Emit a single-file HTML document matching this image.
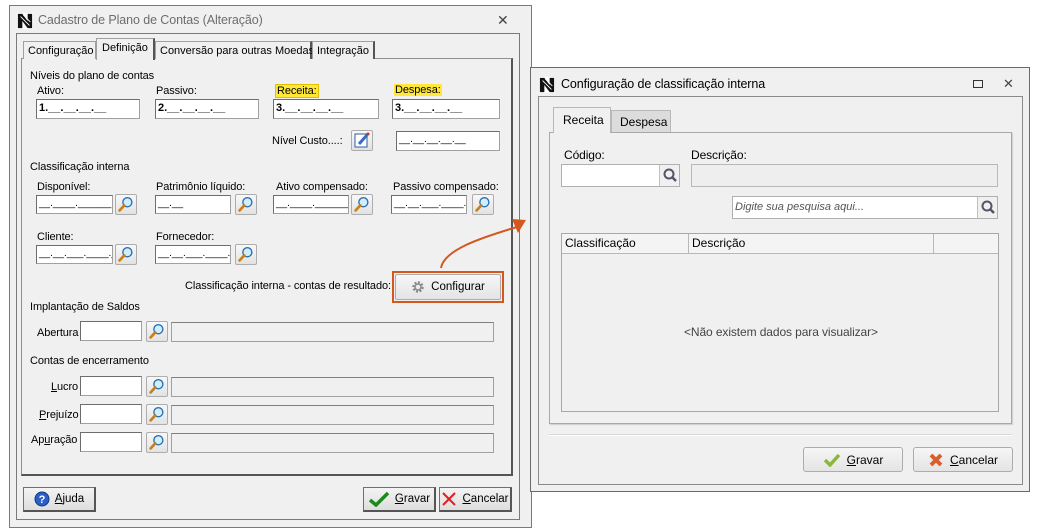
<!DOCTYPE html>
<html><head><meta charset="utf-8"><style>
*{box-sizing:border-box;margin:0;padding:0}
body{width:1040px;height:531px;background:#fff;position:relative;overflow:hidden;font-family:"Liberation Sans",sans-serif;font-size:11px;color:#000}
.a{position:absolute;white-space:nowrap}
.in{position:absolute;background:#fff;border:1px solid #a0a0a0;border-top-color:#6d6d6d;border-left-color:#6d6d6d;font-size:10px;padding:2px 2px;white-space:nowrap;overflow:hidden}
.ro{position:absolute;background:#f0f0f0;border:1px solid #a0a0a0;border-top-color:#808080}
.lupa{position:absolute;width:22px;height:21px;border:1px solid #adadad;border-radius:2px;background:linear-gradient(#f8f8f8,#e2e2e2)}
.btn{position:absolute;border:1px solid #707070;background:linear-gradient(#f4f4f4,#dedede);display:flex;align-items:center;justify-content:center;gap:5px;font-size:11.5px}
.btn2{position:absolute;border:1px solid #acacac;border-radius:3px;background:linear-gradient(#f6f6f6,#e4e4e4);display:flex;align-items:center;justify-content:center;gap:6px;font-size:12px}
.lbl{position:absolute;font-size:11px;white-space:nowrap;letter-spacing:-0.1px}
u{text-decoration:underline}
</style></head><body>
<svg width="0" height="0" style="position:absolute"><defs>
<symbol id="mg" viewBox="0 0 22 21"><circle cx="12.5" cy="8" r="5" fill="#cfefff" stroke="#2a6fb0" stroke-width="1.5"/><path d="M9 11.5 L4 17" stroke="#c8801a" stroke-width="3" stroke-linecap="round"/></symbol>
<symbol id="lg" viewBox="0 0 18 18"><rect width="18" height="18" fill="#fff"/><path d="M1 1h5l6 8v-8h5v16h-5l-6-8v8h-5z" fill="#111"/><path d="M4 4l10 10M7 2l8 8" stroke="#fff" stroke-width="1"/></symbol>
</defs></svg>

<!-- LEFT WINDOW -->
<div class="a" style="left:9px;top:5px;width:523px;height:523px;border:1px solid #7a7a7a;background:#f0f0f0"></div>
<svg class="a" style="left:17px;top:13px" width="16" height="16"><use href="#lg"/></svg>
<div class="lbl" style="left:38px;top:13px;font-size:12.5px;color:#6d6d6d">Cadastro de Plano de Contas (Alteração)</div>
<div class="lbl" style="left:497px;top:12px;font-size:14px;color:#444">✕</div>
<div class="a" style="left:16px;top:33px;width:504px;height:487px;border:1px solid #7a7a7a;background:#f0f0f0"></div>
<!-- tabs -->
<div class="a" style="left:21px;top:58px;width:492px;height:418px;border:1px solid #909090;border-right:2px solid #555;border-bottom:2px solid #555;background:#f0f0f0"></div>
<div class="a" style="left:23px;top:41px;width:73px;height:18px;border:1px solid #a0a0a0;border-bottom:none;background:#f0f0f0;padding:3px 4px">Configuração</div>
<div class="a" style="left:96px;top:38px;width:59px;height:22px;border:1px solid #a0a0a0;border-right:2px solid #555;border-bottom:none;background:#f0f0f0;padding:3px 5px">Definição</div>
<div class="a" style="left:155px;top:41px;width:157px;height:18px;border:1px solid #a0a0a0;border-right:2px solid #555;border-bottom:none;background:#f0f0f0;padding:3px 4px">Conversão para outras Moedas</div>
<div class="a" style="left:312px;top:41px;width:63px;height:18px;border:1px solid #a0a0a0;border-right:2px solid #555;border-bottom:none;background:#f0f0f0;padding:3px 4px">Integração</div>

<div class="lbl" style="left:30px;top:70px">Níveis do plano de contas</div>
<div class="lbl" style="left:37px;top:85px">Ativo:</div>
<div class="lbl" style="left:156px;top:85px">Passivo:</div>
<div class="lbl" style="left:275px;top:84px;background:#ffe83a;border:1px solid #e0c000;padding:0 1px">Receita:</div>
<div class="lbl" style="left:394px;top:84px;background:#ffe83a;padding:0 1px">Despesa:</div>
<div class="in" style="left:36px;top:99px;width:104px;height:20px;font-weight:bold;font-size:11px">1.__.__.__.__</div>
<div class="in" style="left:155px;top:99px;width:104px;height:20px;font-weight:bold;font-size:11px">2.__.__.__.__</div>
<div class="in" style="left:273px;top:99px;width:106px;height:20px;font-weight:bold;font-size:11px">3.__.__.__.__</div>
<div class="in" style="left:392px;top:99px;width:108px;height:20px;font-weight:bold;font-size:11px">3.__.__.__.__</div>
<div class="lbl" style="left:272px;top:135px">Nível Custo....:</div>
<div class="lupa" style="left:351px;top:130px"><svg width="20" height="19" viewBox="0 0 20 19"><rect x="3" y="3" width="12" height="13" fill="#fff" stroke="#2a5ea8"/><path d="M7 13 L15 4" stroke="#3a6cc0" stroke-width="3"/><circle cx="16" cy="3" r="1.5" fill="#c03030"/></svg></div>
<div class="in" style="left:396px;top:131px;width:104px;height:20px">__.__.__.__.__</div>

<div class="lbl" style="left:30px;top:161px">Classificação interna</div>
<div class="lbl" style="left:37px;top:181px">Disponível:</div>
<div class="lbl" style="left:156px;top:181px">Patrimônio líquido:</div>
<div class="lbl" style="left:276px;top:181px">Ativo compensado:</div>
<div class="lbl" style="left:393px;top:181px">Passivo compensado:</div>
<div class="in" style="left:36px;top:195px;width:77px;height:19px">__.____.______</div><div class="lupa" style="left:115px;top:194px"><svg width="20" height="19"><use href="#mg"/></svg></div>
<div class="in" style="left:155px;top:195px;width:76px;height:19px">__.__</div><div class="lupa" style="left:235px;top:194px"><svg width="20" height="19"><use href="#mg"/></svg></div>
<div class="in" style="left:273px;top:195px;width:76px;height:19px">__.____.______</div><div class="lupa" style="left:351px;top:194px"><svg width="20" height="19"><use href="#mg"/></svg></div>
<div class="in" style="left:391px;top:195px;width:76px;height:19px">__.__.___.____.__</div><div class="lupa" style="left:472px;top:194px"><svg width="20" height="19"><use href="#mg"/></svg></div>
<div class="lbl" style="left:37px;top:231px">Cliente:</div>
<div class="lbl" style="left:156px;top:231px">Fornecedor:</div>
<div class="in" style="left:36px;top:245px;width:77px;height:19px">__.__.___.____.__</div><div class="lupa" style="left:115px;top:244px"><svg width="20" height="19"><use href="#mg"/></svg></div>
<div class="in" style="left:155px;top:245px;width:76px;height:19px">__.__.___.____.__</div><div class="lupa" style="left:235px;top:244px"><svg width="20" height="19"><use href="#mg"/></svg></div>

<div class="lbl" style="left:185px;top:280px">Classificação interna - contas de resultado:</div>
<div class="a" style="left:392px;top:271px;width:112px;height:32px;border:2px solid #d4571c"></div>
<div class="btn2" style="left:395px;top:274px;width:106px;height:26px;border-radius:2px;font-size:11.5px">
<svg width="14" height="14" viewBox="0 0 14 14"><circle cx="7" cy="7" r="4.5" fill="none" stroke="#8a8a8a" stroke-width="2.5" stroke-dasharray="2 1.5"/><circle cx="7" cy="7" r="3" fill="none" stroke="#8a8a8a" stroke-width="1.5"/></svg>Configurar</div>

<div class="lbl" style="left:30px;top:301px">Implantação de Saldos</div>
<div class="lbl" style="left:37px;top:327px">Abertura</div>
<div class="in" style="left:80px;top:321px;width:62px;height:20px"></div><div class="lupa" style="left:146px;top:321px"><svg width="20" height="19"><use href="#mg"/></svg></div><div class="ro" style="left:171px;top:322px;width:323px;height:20px"></div>
<div class="lbl" style="left:30px;top:355px">Contas de encerramento</div>
<div class="lbl" style="left:51px;top:381px"><u>L</u>ucro</div>
<div class="in" style="left:80px;top:376px;width:62px;height:20px"></div><div class="lupa" style="left:146px;top:376px"><svg width="20" height="19"><use href="#mg"/></svg></div><div class="ro" style="left:171px;top:377px;width:323px;height:20px"></div>
<div class="lbl" style="left:39px;top:409px"><u>P</u>rejuízo</div>
<div class="in" style="left:80px;top:404px;width:62px;height:20px"></div><div class="lupa" style="left:146px;top:404px"><svg width="20" height="19"><use href="#mg"/></svg></div><div class="ro" style="left:171px;top:405px;width:323px;height:20px"></div>
<div class="lbl" style="left:31px;top:434px">Ap<u>u</u>ração</div>
<div class="in" style="left:80px;top:432px;width:62px;height:20px"></div><div class="lupa" style="left:146px;top:432px"><svg width="20" height="19"><use href="#mg"/></svg></div><div class="ro" style="left:171px;top:433px;width:323px;height:20px"></div>

<div class="btn" style="left:23px;top:487px;width:73px;height:25px;border-right:2px solid #555;border-bottom:2px solid #555"><svg width="16" height="16"><circle cx="8" cy="8" r="7" fill="#2a5ec8" stroke="#123a80"/><text x="8" y="12" font-size="11" font-weight="bold" fill="#fff" text-anchor="middle" font-family="Liberation Sans">?</text></svg><span><u>A</u>juda</span></div>
<div class="btn" style="left:363px;top:487px;width:73px;height:25px;border-right:2px solid #555;border-bottom:2px solid #555"><svg width="22" height="16"><path d="M2 9 L8 14 L20 2" fill="none" stroke="#1e8a1e" stroke-width="3.5"/></svg><span><u>G</u>ravar</span></div>
<div class="btn" style="left:439px;top:487px;width:73px;height:25px;border-right:2px solid #555;border-bottom:2px solid #555"><svg width="16" height="16"><path d="M2 2 L14 14 M14 2 L2 14" stroke="#e02020" stroke-width="2"/></svg><span><u>C</u>ancelar</span></div>

<!-- arrow -->
<svg class="a" style="left:430px;top:205px" width="110" height="70"><path d="M11 63 C 14 45, 50 33, 87 22" fill="none" stroke="#d4571c" stroke-width="2"/><path d="M82 14 L96 15 L88 28 Z" fill="#d4571c"/></svg>

<!-- RIGHT WINDOW -->
<div class="a" style="left:530px;top:67px;width:500px;height:425px;border:1px solid #6a6a6a;background:#f0f0f0"></div>
<svg class="a" style="left:539px;top:77px" width="16" height="16"><use href="#lg"/></svg>
<div class="lbl" style="left:561px;top:77px;font-size:12.5px">Configuração de classificação interna</div>
<div class="a" style="left:973px;top:80px;width:10px;height:8px;border:1px solid #333"></div>
<div class="lbl" style="left:1003px;top:76px;font-size:13px;color:#444">✕</div>
<div class="a" style="left:538px;top:96px;width:485px;height:389px;border:1px solid #8a8a8a;background:#f0f0f0"></div>
<div class="a" style="left:549px;top:132px;width:463px;height:292px;border:1px solid #a8a8a8;background:#f0f0f0;box-shadow:1px 1px 1px #ccc"></div>
<div class="a" style="left:553px;top:107px;width:58px;height:26px;border:1px solid #b8b8b8;border-bottom:none;background:#f0f0f0;font-size:12px;padding:5px 9px">Receita</div>
<div class="a" style="left:611px;top:110px;width:60px;height:22px;border:1px solid #b8b8b8;border-bottom:none;background:#dcdcdc;font-size:12px;padding:4px 8px">Despesa</div>
<div class="lbl" style="left:564px;top:148px;font-size:12px">Código:</div>
<div class="lbl" style="left:691px;top:148px;font-size:12px">Descrição:</div>
<div class="a" style="left:561px;top:164px;width:119px;height:23px;border:1px solid #b0b0b0;background:#fff"></div>
<div class="a" style="left:659px;top:165px;width:20px;height:21px;border-left:1px solid #c0c0c0;background:#f0f0f0"><svg width="20" height="21"><circle cx="9" cy="9" r="4.5" fill="none" stroke="#556" stroke-width="2"/><path d="M12 12 L16 16" stroke="#556" stroke-width="2.5"/></svg></div>
<div class="a" style="left:691px;top:164px;width:307px;height:23px;border:1px solid #b8b8b8;background:#eeeeee"></div>
<div class="a" style="left:732px;top:196px;width:266px;height:23px;border:1px solid #b0b0b0;background:#fff;font-style:italic;color:#555;font-size:11px;padding:4px 2px">Digite sua pesquisa aqui...</div>
<div class="a" style="left:977px;top:197px;width:20px;height:21px;border-left:1px solid #c0c0c0;background:#f0f0f0"><svg width="20" height="21"><circle cx="9" cy="9" r="4.5" fill="none" stroke="#556" stroke-width="2"/><path d="M12 12 L16 16" stroke="#556" stroke-width="2.5"/></svg></div>
<div class="a" style="left:561px;top:233px;width:438px;height:179px;border:1px solid #a8a8a8;background:#f0f0f0"></div>
<div class="a" style="left:562px;top:234px;width:436px;height:20px;border-bottom:1px solid #b8b8b8;background:#f4f4f4;font-size:12px">
<div class="a" style="left:3px;top:2px">Classificação</div>
<div class="a" style="left:126px;top:0;width:1px;height:19px;background:#b8b8b8"></div>
<div class="a" style="left:130px;top:2px">Descrição</div>
<div class="a" style="left:371px;top:0;width:1px;height:19px;background:#b8b8b8"></div>
</div>
<div class="lbl" style="left:684px;top:325px;font-size:12px;color:#444">&lt;Não existem dados para visualizar&gt;</div>
<div class="a" style="left:549px;top:434px;width:463px;height:2px;border-top:1px solid #d8d8d8;border-bottom:1px solid #fff"></div>
<div class="btn2" style="left:803px;top:447px;width:100px;height:25px"><svg width="18" height="14"><path d="M2 7 L7 12 L16 2" fill="none" stroke="#8cb83a" stroke-width="3.5"/></svg><span><u>G</u>ravar</span></div>
<div class="btn2" style="left:913px;top:447px;width:100px;height:25px"><svg width="16" height="16"><path d="M3 3 L13 13 M13 3 L3 13" stroke="#d8602c" stroke-width="4"/></svg><span><u>C</u>ancelar</span></div>
</body></html>
